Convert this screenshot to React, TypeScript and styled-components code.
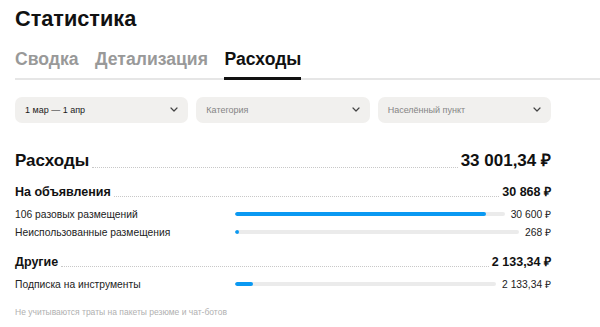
import React from "react";
import styled, { createGlobalStyle } from "styled-components";

const GlobalStyle = createGlobalStyle`
  body {
    margin: 0;
    background: #fff;
    font-family: "Liberation Sans", Arial, sans-serif;
    color: #1a1a1a;
  }
`;

interface Line {
  label: string;
  value: string;
  percent: number;
}

interface Group {
  title: string;
  total: string;
  lines: Line[];
}

const groups: Group[] = [
  {
    title: "На объявления",
    total: "30 868 ₽",
    lines: [
      { label: "106 разовых размещений", value: "30 600 ₽", percent: 93 },
      { label: "Неиспользованные размещения", value: "268 ₽", percent: 1.5 },
    ],
  },
  {
    title: "Другие",
    total: "2 133,34 ₽",
    lines: [{ label: "Подписка на инструменты", value: "2 133,34 ₽", percent: 7 }],
  },
];

export default function App() {
  return (
    <>
      <GlobalStyle />
      <Page>
        <Title>Статистика</Title>
        <Tabs>
          <Tab>Сводка</Tab>
          <Tab>Детализация</Tab>
          <Tab $active>Расходы</Tab>
        </Tabs>

        <Content>
          <Filters>
            <Select $filled>
              <span>1 мар — 1 апр</span>
              <Chevron />
            </Select>
            <Select>
              <span>Категория</span>
              <Chevron />
            </Select>
            <Select>
              <span>Населённый пункт</span>
              <Chevron />
            </Select>
          </Filters>

          <SummaryRow>
            <SummaryLabel>Расходы</SummaryLabel>
            <Dots />
            <SummaryLabel>33 001,34 ₽</SummaryLabel>
          </SummaryRow>

          {groups.map((g) => (
            <GroupBlock key={g.title}>
              <GroupRow>
                <GroupLabel>{g.title}</GroupLabel>
                <Dots />
                <GroupLabel>{g.total}</GroupLabel>
              </GroupRow>
              {g.lines.map((l) => (
                <ItemRow key={l.label}>
                  <ItemLabel>{l.label}</ItemLabel>
                  <Track>
                    <Fill style={{ width: `${l.percent}%` }} />
                  </Track>
                  <ItemValue>{l.value}</ItemValue>
                </ItemRow>
              ))}
            </GroupBlock>
          ))}

          <Note>Не учитываются траты на пакеты резюме и чат-ботов</Note>
        </Content>
      </Page>
    </>
  );
}

function Chevron() {
  return (
    <svg width="8" height="5" viewBox="0 0 8 5" fill="none">
      <path d="M1 1l3 3 3-3" stroke="#444" strokeWidth="1.2" strokeLinecap="round" strokeLinejoin="round" />
    </svg>
  );
}

const Page = styled.div`
  padding: 6px 0 0 15px;
`;

const Title = styled.h1`
  margin: 0;
  font-size: 21.7px;
  line-height: 26px;
  font-weight: 700;
  color: #111;
`;

const Tabs = styled.div`
  display: flex;
  gap: 16.5px;
  margin-top: 16px;
  border-bottom: 2px solid #e6e6e6;
`;

const Tab = styled.div<{ $active?: boolean }>`
  font-size: 17.6px;
  font-weight: 700;
  line-height: 22px;
  padding-bottom: 7px;
  margin-bottom: -2px;
  color: ${(p) => (p.$active ? "#111" : "#999")};
  border-bottom: 3px solid ${(p) => (p.$active ? "#111" : "transparent")};
`;

const Content = styled.div`
  width: 536px;
`;

const Filters = styled.div`
  display: grid;
  grid-template-columns: repeat(3, 1fr);
  gap: 8px;
  margin-top: 17px;
`;

const Select = styled.div<{ $filled?: boolean }>`
  height: 25px;
  border-radius: 7px;
  background: #f1f0ee;
  display: flex;
  align-items: center;
  justify-content: space-between;
  padding: 0 10px 1px 10px;
  font-size: 9px;
  color: ${(p) => (p.$filled ? "#1a1a1a" : "#858585")};
`;

const Dots = styled.div`
  flex: 1;
  align-self: flex-end;
  margin: 0 3px 4px;
  border-bottom: 1px dotted #c8c8c8;
`;

const SummaryRow = styled.div`
  display: flex;
  align-items: baseline;
  margin-top: 27px;
`;

const SummaryLabel = styled.div`
  font-size: 17px;
  line-height: 22px;
  font-weight: 700;
  color: #111;
`;

const GroupBlock = styled.div`
  margin-top: 11px;
  & + & {
    margin-top: 12px;
  }
`;

const GroupRow = styled.div`
  display: flex;
  align-items: baseline;
  margin-bottom: 4px;
`;

const GroupLabel = styled.div`
  font-size: 12.5px;
  line-height: 18px;
  font-weight: 700;
  color: #111;
`;

const ItemRow = styled.div`
  display: flex;
  align-items: center;
  height: 18px;
  font-size: 10.3px;
  color: #222;
`;

const ItemLabel = styled.div`
  width: 220px;
  flex-shrink: 0;
`;

const Track = styled.div`
  flex: 1;
  height: 4px;
  border-radius: 2px;
  background: #ebebeb;
  margin-right: 6px;
  overflow: hidden;
`;

const Fill = styled.div`
  height: 100%;
  border-radius: 2px;
  background: #0a99f2;
`;

const ItemValue = styled.div`
  text-align: right;
  white-space: nowrap;
`;

const Note = styled.div`
  margin-top: 14px;
  font-size: 8.5px;
  color: #b0b0b0;
`;
